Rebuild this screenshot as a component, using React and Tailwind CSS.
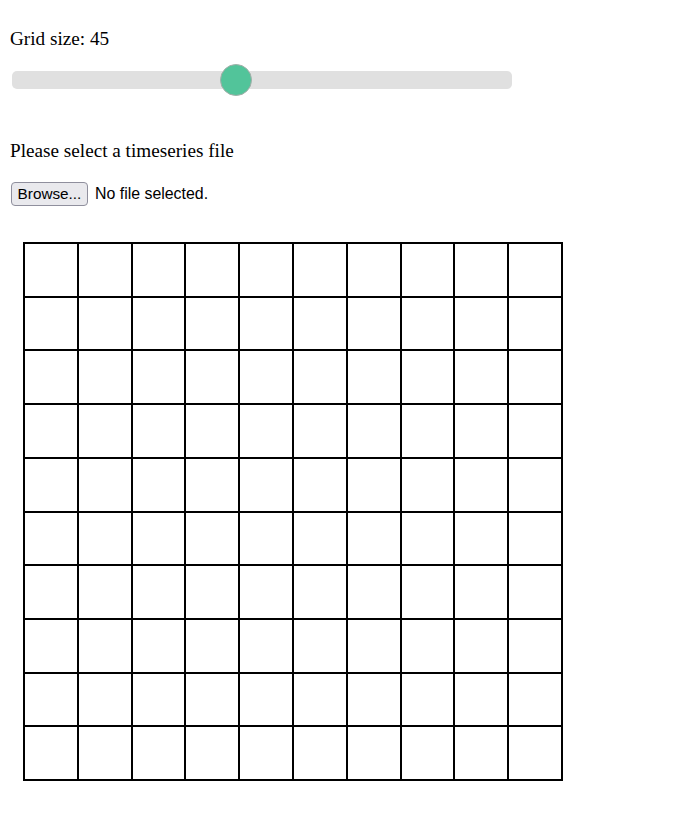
import { useState } from "react";

const App = () => {
  const [size] = useState(45);
  const cells = Array.from({ length: 100 });

  return (
    <div className="min-h-[821px] bg-white px-[10px] font-['Liberation_Serif',serif] text-[19.2px] leading-[22px] text-black">
      <p className="pt-[28px]">Grid size: {size}</p>

      <div className="relative mt-[14px] ml-[2px] flex h-[32px] w-[500px] items-center">
        <div className="h-[18px] w-full rounded-[5px] bg-[#e0e0e0]" />
        <div className="absolute left-[208px] top-0 h-[32px] w-[32px] rounded-full border border-[#a3aea9] bg-[#52c49a]" />
      </div>

      <p className="mt-[44px]">Please select a timeseries file</p>

      <div className="mt-[20px] flex items-center gap-[7px] font-['Liberation_Sans',sans-serif] text-[15.9px] leading-[18px]">
        <button className="ml-px h-[24px] w-[77px] rounded-[4px] border border-[#8f8f9d] bg-[#e9e9ed] text-[15.3px]">
          Browse...
        </button>
        <span>No file selected.</span>
      </div>

      <div className="mt-[36px] ml-[13px] grid h-[539px] w-[540px] grid-cols-10 grid-rows-10 gap-[2px] bg-black p-[2px]">
        {cells.map((_, i) => (
          <div key={i} className="bg-white" />
        ))}
      </div>
    </div>
  );
};

export default App;
